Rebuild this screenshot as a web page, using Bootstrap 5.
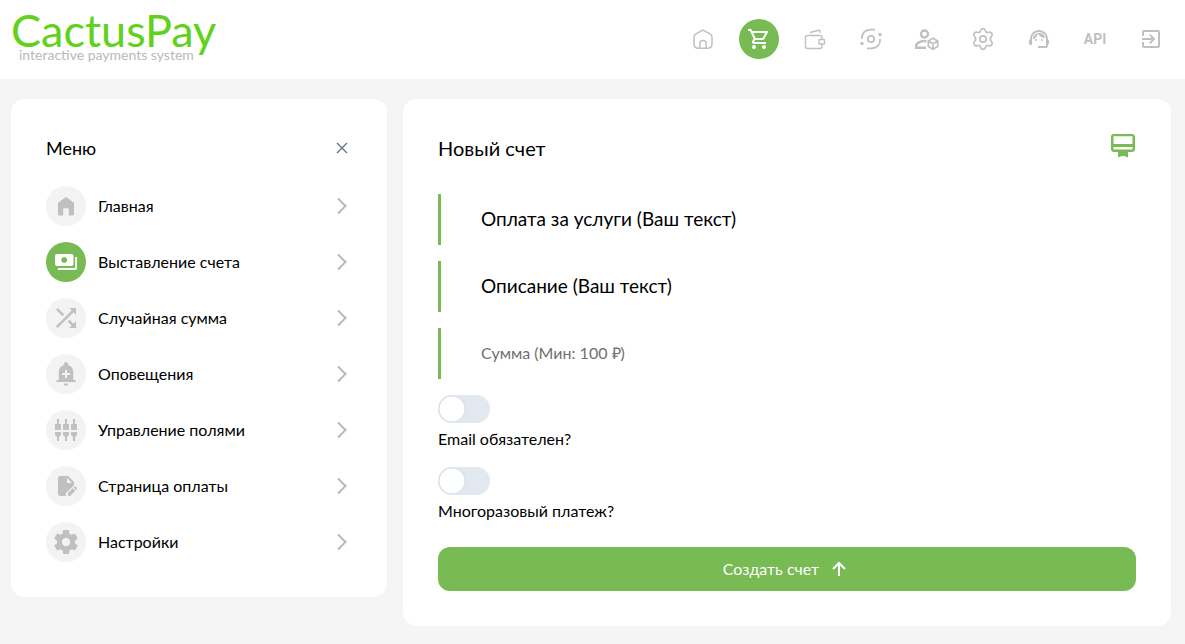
<!DOCTYPE html>
<html lang="ru">
<head>
<meta charset="utf-8">
<meta name="viewport" content="width=device-width, initial-scale=1">
<title>CactusPay</title>
<link href="https://cdn.jsdelivr.net/npm/bootstrap@5.3.0/dist/css/bootstrap.min.css" rel="stylesheet">
<style>
  :root { --green: #78ba54; --muted: #c0c0c0; }
  body { background: #f5f5f5; color: #000; font-family: Lato, "Open Sans", sans-serif; font-size: 16px; line-height: 24px; }
  .shell { padding-left: 11px; padding-right: 14px; }
  .topbar { background: #fff; height: 79px; }
  .brand { padding-top: 10px; }
  .brand-name { font-size: 45px; line-height: 40px; color: #61d11c; }
  .brand-tag { font-size: 14px; line-height: 14px; color: #b9b9b9; padding-left: 8px; margin-top: -2px; }
  .icon-bar { height: 78px; }
  .round { width: 40px; height: 40px; border-radius: 50%; color: var(--muted); flex: none; }
  .round svg { display: block; width: 40px; height: 40px; }
  .round.tinted { background: #f3f3f3; }
  .round.current { background: var(--green); color: #fff; }
  .api { font: bold 14px/40px Roboto, sans-serif; }
  .tiles { --bs-gutter-x: 16px; padding-top: 20px; }
  .panel { background: #fff; border-radius: 14px; padding: 35px; }
  .panel-head { height: 28px; }
  .panel-head h1, .panel-head h2 { margin: 0; font-weight: 400; line-height: 28px; }
  .panel-head h1 { font-size: 20px; }
  .panel-head h2 { font-size: 18px; }
  .close-x { width: 12px; height: 12px; color: #64748b; }
  .menu-link { color: #000; text-decoration: none; gap: 12px; }
  .chevron { width: 12px; height: 18px; color: #b8b8b8; }
  .line-field { height: 51px; border: 0; border-left: 3px solid var(--green); border-radius: 0; padding: 0 40px 2px; color: #000; font-size: 19px; }
  .line-field::placeholder { color: #6f6f6f; font-size: 16px; opacity: 1; }
  .line-field.amount { font-size: 16px; }
  .line-field:focus { box-shadow: none; border-color: var(--green); }
  .toggle.form-check-input { float: none; display: block; width: 52px; height: 28px; margin: 0; border: 0; border-radius: 14px;
    background: #e1e8f0 radial-gradient(circle at 14px 14px, #fff 12px, #d5dde7 13px, #e1e8f0 14px); }
  .toggle.form-check-input:checked { background: var(--green) radial-gradient(circle at 38px 14px, #fff 12px, var(--green) 13px); }
  .create { background: var(--green); color: #fff; height: 44px; border: 0; border-radius: 12px; padding: 0; }
  .create:hover { background: #68a946; color: #fff; }
</style>
</head>
<body>
<header class="topbar shell d-flex justify-content-between align-items-start">
  <a href="#" class="brand text-decoration-none d-flex flex-column">
    <span class="brand-name">CactusPay</span>
    <span class="brand-tag">interactive payments system</span>
  </a>
  <nav class="icon-bar d-flex align-items-center gap-3" aria-label="Разделы">
    <a href="#" class="round" aria-label="Главная"><svg viewBox="0 0 40 40" fill="none" stroke="currentColor" stroke-width="1.5"><path d="M11 18.2q0-2 1.6-3l5.7-3.4q1.7-1 3.4 0l5.7 3.4q1.6 1 1.6 3v6.6q0 4.5-4.5 4.5h-9q-4.500 0-4.500-4.500z"/><path d="M16.800 29v-4.300a3.200 3.200 0 0 1 6.400 0V29"/></svg></a>
    <a href="#" class="round current" aria-label="Счета"><svg viewBox="0 0 40 40" fill="currentColor"><path transform="translate(8 8)" d="M15.550 13c.75 0 1.410-.41 1.750-1.030l3.580-6.490A.996.996 0 0 0 20.010 4H5.210l-.94-2H1v2h2l3.600 7.590-1.350 2.440C4.520 15.370 5.480 17 7 17h12v-2H7l1.100-2zM6.160 6h12.150l-2.760 5H8.530zM7 18a2 2 0 1 0 0 4 2 2 0 0 0 0-4zm10 0a2 2 0 1 0 0 4 2 2 0 0 0 0-4z"/></svg></a>
    <a href="#" class="round" aria-label="Кошелёк"><svg viewBox="0 0 40 40" fill="none" stroke="currentColor" stroke-width="1.400"><path d="M27 21v-2.500q0-2-2-2H12.500q-2 0-2 2v9q0 2 2 2H25q2 0 2-2V25"/><rect x="24" y="20.500" width="5.500" height="4.500" rx=".5"/><path d="M15 13.500l8.700-2.300q.8-.2 1 .6l.5 2"/></svg></a>
    <a href="#" class="round" aria-label="Обмен"><svg viewBox="0 0 40 40" fill="none" stroke="currentColor" stroke-width="1.700"><circle cx="20" cy="20" r="3.200"/><path d="M24 10.700h-4.500Q11 11 10.800 20M16 29.300h4.500Q29.200 29 29.200 20"/><circle cx="29" cy="15.500" r="1.700" fill="currentColor" stroke="none"/><circle cx="11" cy="24.500" r="1.700" fill="currentColor" stroke="none"/></svg></a>
    <a href="#" class="round" aria-label="Клиенты"><svg viewBox="0 0 40 40" fill="none" stroke="currentColor" stroke-width="2.400"><circle cx="17.500" cy="15" r="3.500"/><path d="M19.500 22.200c-5-.8-10.300 1.500-10.300 4.600v2H19"/><path stroke-width="1.700" d="M26 19.300l4.700 2.600v5.600L26 30.200l-4.700-2.700v-5.600zM21.300 22l4.700 2.700 4.700-2.700M26 24.700v5.500"/></svg></a>
    <a href="#" class="round" aria-label="Настройки"><svg viewBox="0 0 40 40" fill="none" stroke="currentColor" stroke-width="1.700"><circle cx="20" cy="20" r="3.200"/><path d="M17.500 11.700q.5-2 2.500-2t2.500 2q.8 2.600 3.400 1.600 2-.6 3 1.100t-.5 3.100q-2.200 2.500 0 5 1.500 1.500.5 3.100t-3 1.100q-2.600-1-3.400 1.600-.5 2-2.500 2t-2.500-2q-.8-2.600-3.400-1.600-2 .6-3-1.100t.5-3.100q2.200-2.500 0-5-1.500-1.400-.5-3.100t3-1.100q2.600 1 3.400-1.600z"/></svg></a>
    <a href="#" class="round" aria-label="Поддержка"><svg viewBox="0 0 40 40" fill="currentColor"><g transform="translate(8 8)"><path d="M21 12.220C21 6.730 16.740 3 12 3c-4.690 0-9 3.650-9 9.280-.6.340-1 .98-1 1.720v2c0 1.100.9 2 2 2h1v-6.100c0-3.870 3.130-7 7-7s7 3.130 7 7V19h-8v2h8c1.100 0 2-.9 2-2v-1.220c.59-.31 1-.92 1-1.640v-2.300c0-.7-.41-1.310-1-1.620z"/><circle cx="9" cy="13" r="1"/><circle cx="15" cy="13" r="1"/><path d="M18 11.030A6.040 6.040 0 0 0 12.050 6c-3.030 0-6.290 2.510-6.030 6.450a8.075 8.075 0 0 0 4.860-5.890c1.310 2.630 4 4.440 7.120 4.470z"/></g></svg></a>
    <a href="#" class="round api text-center text-decoration-none">API</a>
    <a href="#" class="round" aria-label="Выход"><svg viewBox="0 0 40 40" fill="currentColor"><path transform="translate(8 8)" d="M10.090 15.590L11.500 17l5-5-5-5-1.410 1.410L12.670 11H3v2h9.670zM19 3H5c-1.110 0-2 .9-2 2v4h2V5h14v14H5v-4H3v4c0 1.100.89 2 2 2h14c1.100 0 2-.9 2-2V5c0-1.100-.9-2-2-2z"/></svg></a>
  </nav>
</header>

<main class="shell">
  <div class="row tiles align-items-start">
    <aside class="col-4">
      <div class="panel">
        <div class="panel-head d-flex align-items-center justify-content-between mb-4 pe-1">
          <h2>Меню</h2>
          <button type="button" class="btn p-0 border-0 d-flex" aria-label="Закрыть"><svg class="close-x" viewBox="0 0 12 12" fill="none" stroke="currentColor" stroke-width="1.400"><path d="M1 1l10 10M11 1L1 11"/></svg></button>
        </div>
        <nav class="d-flex flex-column gap-3 pe-1" aria-label="Меню">
          <a href="#" class="menu-link d-flex align-items-center"><span class="round tinted"><svg viewBox="0 0 40 40" fill="currentColor"><path d="M12 17.800q0-1 .8-1.600l6-4.500q1.200-.9 2.400 0l6 4.500q.8.6.8 1.600V28q0 1.500-1.500 1.500h-3q-.7 0-.7-.7V23q0-.8-.8-.8h-4q-.8 0-.8.8v5.800q0 .7-.7.7h-3Q12 29.500 12 28z"/></svg></span><span class="flex-grow-1">Главная</span><svg class="chevron" viewBox="0 0 12 18" fill="none" stroke="currentColor" stroke-width="2"><path d="M2 1.500L9.500 9 2 16.500"/></svg></a>
          <a href="#" class="menu-link d-flex align-items-center" aria-current="page"><span class="round current"><svg viewBox="0 0 40 40" fill="currentColor"><path fill-rule="evenodd" d="M11 12h14.500q2 0 2 2v8q0 2-2 2H11q-2 0-2-2v-8q0-2 2-2zm7.200 3a3 3 0 1 0 .01 0z"/><path d="M29.200 15H31v11q0 2-2 2H12v-1.900h17.200z"/></svg></span><span class="flex-grow-1">Выставление счета</span><svg class="chevron" viewBox="0 0 12 18" fill="none" stroke="currentColor" stroke-width="2"><path d="M2 1.500L9.500 9 2 16.500"/></svg></a>
          <a href="#" class="menu-link d-flex align-items-center"><span class="round tinted"><svg viewBox="0 0 40 40" fill="currentColor"><path transform="translate(5 5) scale(1.250)" d="M10.590 9.170L5.410 4 4 5.410l5.170 5.170zM14.500 4l2.040 2.040L4 18.590 5.410 20 17.960 7.460 20 9.500V4zm.33 9.410l-1.410 1.410 3.130 3.130L14.500 20H20v-5.500l-2.040 2.040z"/></svg></span><span class="flex-grow-1">Случайная сумма</span><svg class="chevron" viewBox="0 0 12 18" fill="none" stroke="currentColor" stroke-width="2"><path d="M2 1.500L9.500 9 2 16.500"/></svg></a>
          <a href="#" class="menu-link d-flex align-items-center"><span class="round tinted"><svg viewBox="0 0 40 40" fill="currentColor"><path fill-rule="evenodd" d="M10.500 28v-2h2.300v-7.500q0-6 5.200-7.500v-1a2 2 0 0 1 4 0v1q5.200 1.500 5.200 7.500V26h2.300v2zM19 16v3h-3v2h3v3h2v-3h3v-2h-3v-3z"/><path d="M17.700 29.500h4.600a2.300 2.300 0 0 1-4.600 0z"/></svg></span><span class="flex-grow-1">Оповещения</span><svg class="chevron" viewBox="0 0 12 18" fill="none" stroke="currentColor" stroke-width="2"><path d="M2 1.500L9.500 9 2 16.500"/></svg></a>
          <a href="#" class="menu-link d-flex align-items-center"><span class="round tinted"><svg viewBox="0 0 40 40" fill="currentColor"><path d="M11 9h2v5h2v6H9v-6h2zM19 9h2v5h2v6h-6v-6h2zM27 9h2v5h2v6h-6v-6h2zM9 22h6v3l-2 2v4h-2v-4l-2-2zM17 22h6v3l-2 2v4h-2v-4l-2-2zM25 22h6v3l-2 2v4h-2v-4l-2-2z"/></svg></span><span class="flex-grow-1">Управление полями</span><svg class="chevron" viewBox="0 0 12 18" fill="none" stroke="currentColor" stroke-width="2"><path d="M2 1.500L9.500 9 2 16.500"/></svg></a>
          <a href="#" class="menu-link d-flex align-items-center"><span class="round tinted"><svg viewBox="0 0 40 40" fill="currentColor"><path fill-rule="evenodd" d="M14 10h8l6 6v3.200l-8.200 8V30H14q-2 0-2-2V12q0-2 2-2zm7 2v5h5z"/><path d="M22 26.900l4.700-4.700 2.600 2.600-5.200 5.200H22zM27.500 21.400l.7-.7q.8-.7 1.600 0l.9.900q.7.800 0 1.600l-.7.700z"/></svg></span><span class="flex-grow-1">Страница оплаты</span><svg class="chevron" viewBox="0 0 12 18" fill="none" stroke="currentColor" stroke-width="2"><path d="M2 1.500L9.500 9 2 16.500"/></svg></a>
          <a href="#" class="menu-link d-flex align-items-center"><span class="round tinted"><svg viewBox="0 0 40 40" fill="currentColor"><path transform="translate(5 5) scale(1.250)" d="M19.140 12.940c.04-.3.06-.61.06-.94 0-.32-.02-.64-.07-.94l2.030-1.580c.18-.14.23-.41.12-.61l-1.920-3.320c-.12-.22-.37-.29-.59-.22l-2.390.96c-.5-.38-1.030-.7-1.620-.94l-.36-2.540c-.04-.24-.24-.41-.48-.41h-3.840c-.24 0-.43.17-.47.41l-.36 2.540c-.59.24-1.130.57-1.620.94l-2.390-.96c-.22-.08-.47 0-.59.22L2.740 8.870c-.12.21-.08.47.12.61l2.030 1.580c-.05.3-.09.63-.09.94s.02.64.07.94l-2.030 1.580c-.18.14-.23.41-.12.61l1.920 3.320c.12.22.37.29.59.22l2.390-.96c.5.38 1.030.7 1.620.94l.36 2.540c.05.24.24.41.48.41h3.840c.24 0 .44-.17.47-.41l.36-2.540c.59-.24 1.130-.56 1.620-.94l2.390.96c.22.08.47 0 .59-.22l1.920-3.320c.12-.22.07-.47-.12-.61zM12 15.300a3.300 3.300 0 1 1 0-6.600 3.300 3.300 0 0 1 0 6.600z"/></svg></span><span class="flex-grow-1">Настройки</span><svg class="chevron" viewBox="0 0 12 18" fill="none" stroke="currentColor" stroke-width="2"><path d="M2 1.500L9.500 9 2 16.500"/></svg></a>
        </nav>
      </div>
    </aside>
    <section class="col-8">
      <form class="panel">
        <div class="panel-head d-flex justify-content-between mb-4">
          <h1>Новый счет</h1>
          <svg width="26" height="24" viewBox="1 0 26 24" fill="#78ba54" role="img" aria-label="Карта"><path fill-rule="evenodd" d="M3.500 0h19Q26 0 26 3v12q0 3-3 3H19v5.500l-2.500-1-2.500-.8-2.500.8-2.500 1V18H5q-3 0-3-3V3Q2 0 5 0zM4.500 2.300V10h19V2.300zM4.500 13v2.600h19V13z"/></svg>
        </div>
        <div class="d-flex flex-column gap-3 pt-2">
          <input type="text" class="form-control line-field" aria-label="Название" value="Оплата за услуги (Ваш текст)">
          <input type="text" class="form-control line-field" aria-label="Описание" value="Описание (Ваш текст)">
          <input type="text" class="form-control line-field amount" aria-label="Сумма" placeholder="Сумма (Мин: 100 ₽)">
          <div>
            <input class="form-check-input toggle" type="checkbox" id="need-email">
            <label class="d-block mt-1" for="need-email">Email обязателен?</label>
          </div>
          <div>
            <input class="form-check-input toggle" type="checkbox" id="reusable">
            <label class="d-block mt-1" for="reusable">Многоразовый платеж?</label>
          </div>
        </div>
        <button type="submit" class="btn create w-100 mt-4 d-flex align-items-center justify-content-center gap-2"><span>Создать счет</span><svg width="24" height="24" viewBox="0 0 24 24" fill="none" stroke="currentColor" stroke-width="2"><path d="M12 19V6M6 12l6-6 6 6"/></svg></button>
      </form>
    </section>
  </div>
</main>
<script src="https://cdn.jsdelivr.net/npm/bootstrap@5.3.0/dist/js/bootstrap.bundle.min.js"></script>
</body>
</html>
